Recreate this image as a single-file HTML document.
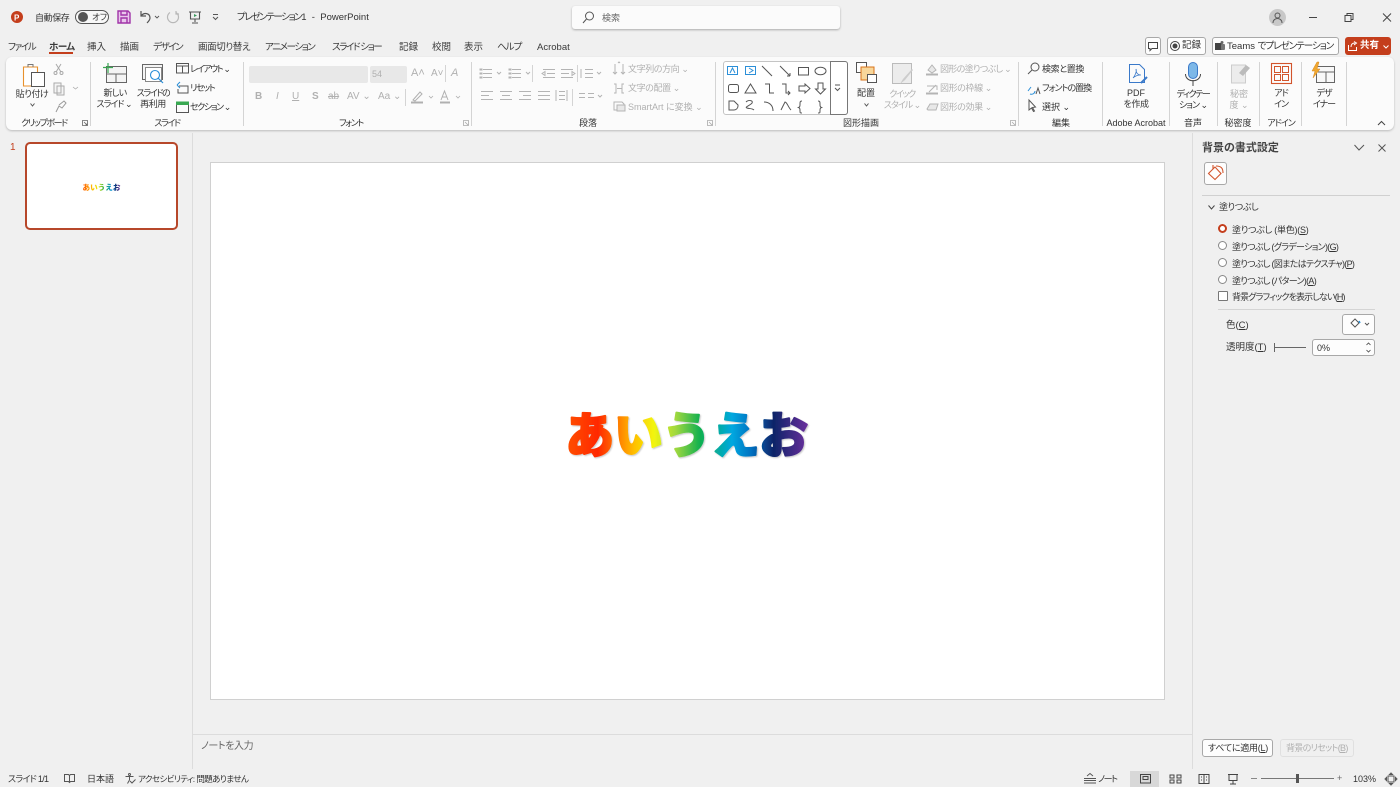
<!DOCTYPE html>
<html lang="ja"><head><meta charset="utf-8"><title>PowerPoint</title>
<style>
html,body{margin:0;padding:0;width:1400px;height:787px;overflow:hidden;background:#f0f0f0}
body{position:relative;font-family:"Liberation Sans","Noto Sans CJK JP",sans-serif;font-size:9px;color:#333;font-feature-settings:"palt" 1}
.t{position:absolute;white-space:nowrap;line-height:12px}
.c{text-align:center;transform:translateX(-50%)}
.g{color:#b0b0b0}
.m{font-size:9.5px;color:#3a3a3a;line-height:12px;top:41.5px}
.k1{letter-spacing:-1.4px}.k2{letter-spacing:-.7px}.k3{letter-spacing:-1px}.k4{letter-spacing:-.4px}
.sep{position:absolute;top:62px;height:64px;width:1px;background:#d4d4d4}
.abs{position:absolute}
svg{position:absolute;overflow:visible}
.btn{position:absolute;background:#fdfdfd;border:1px solid #a8a8a8;border-radius:3px;box-sizing:border-box}
</style></head><body>

<!-- title bar -->
<svg style="left:10px;top:10px" width="14" height="14"><circle cx="7" cy="7" r="6" fill="#c43e1c"/><text x="4" y="10.5" font-size="8" font-weight="700" fill="#fff" font-family="Liberation Sans">P</text></svg>
<div class="t k4" style="left:35px;top:11.500px">自動保存</div>
<div class="abs" style="left:75px;top:10px;width:34px;height:14px;border:1px solid #555;border-radius:8px;box-sizing:border-box;background:#f8f8f8"></div>
<div class="abs" style="left:78px;top:12px;width:10px;height:10px;border-radius:50%;background:#555"></div>
<div class="t" style="left:92px;top:11px;font-size:8.5px">オフ</div>
<svg style="left:117px;top:10px" width="14" height="14" fill="none" stroke="#a033a8" stroke-width="1.4"><path d="M1 1h10l2 2v10H1z" fill="#e9c6ec"/><path d="M4 1v4h6V1M4 13V8h6v5"/></svg>
<svg style="left:138px;top:10px" width="22" height="14" fill="none" stroke="#555" stroke-width="1.2"><path d="M3 1v5h5M3 6c3-4 9-3 9 2 0 2-2 4-3 5"/><path d="M17 6l2 2 2-2" stroke-width=".9"/></svg>
<svg style="left:166px;top:10px" width="14" height="14" fill="none" stroke="#b8b8b8" stroke-width="1.2"><path d="M10 2.500A5.500 5.500 0 1 1 4 2.500M10 1v3h3"/></svg>
<svg style="left:188px;top:11px" width="14" height="13" fill="none" stroke="#555" stroke-width="1.1"><path d="M1 1h12M2.500 1v7h9V1M7 8v3M4 12h6"/><path d="M6 3l3 1.500L6 6z" fill="#3a9a5c" stroke="none"/></svg>
<svg style="left:212px;top:14px" width="7" height="7" fill="none" stroke="#555"><path d="M1 .5h5M1 3l2.500 2.500L6 3"/></svg>
<div class="t" style="left:237px;top:11.500px;font-size:9.500px"><span class="k1">プレゼンテーション</span>1&nbsp; -&nbsp; PowerPoint</div>

<!-- search -->
<div class="abs" style="left:572px;top:6px;width:268px;height:23px;background:#fbfbfb;border-radius:3px;box-shadow:0 1px 2px #aaa"></div>
<svg style="left:582px;top:11px" width="12" height="13" fill="none" stroke="#555" stroke-width="1"><circle cx="7.500" cy="5" r="4"/><path d="M4.500 8L1 12"/></svg>
<div class="t g" style="left:602px;top:12px;color:#666">検索</div>

<!-- window -->
<div class="abs" style="left:1269px;top:9px;width:17px;height:17px;border-radius:50%;background:#c8c8c8"></div>
<svg style="left:1272px;top:12px" width="11" height="11" fill="none" stroke="#555"><circle cx="5.500" cy="3.500" r="2.500"/><path d="M1 11c0-6 9-6 9 0"/></svg>
<svg style="left:1309px;top:12px" width="82" height="12" fill="none" stroke="#444"><path d="M0 5.500h8"/><path d="M36 3.500h6v6h-6zM38 3.500v-2h6v6h-2"/><path d="M74 1.500l8 8M82 1.500l-8 8"/></svg>

<!-- tabs -->
<div class="t m k1" style="left:8px">ファイル</div>
<div class="t m" style="left:49px;font-weight:700;letter-spacing:-.5px">ホーム</div>
<div class="abs" style="left:49px;top:52px;width:24px;height:2px;background:#c43e1c"></div>
<div class="t m" style="left:87px">挿入</div>
<div class="t m" style="left:120px">描画</div>
<div class="t m k1" style="left:153px">デザイン</div>
<div class="t m k4" style="left:198px">画面切り替え</div>
<div class="t m k1" style="left:265px">アニメーション</div>
<div class="t m k1" style="left:332px">スライド ショー</div>
<div class="t m" style="left:399px">記録</div>
<div class="t m" style="left:432px">校閲</div>
<div class="t m" style="left:464px">表示</div>
<div class="t m k3" style="left:497px">ヘルプ</div>
<div class="t m" style="left:537px">Acrobat</div>

<!-- top right buttons -->
<div class="btn" style="left:1145px;top:37px;width:16px;height:18px"></div>
<svg style="left:1148px;top:42px" width="10" height="9" fill="none" stroke="#444"><path d="M.5.500h9v6H4L2 8.500v-2H.5z"/></svg>
<div class="btn" style="left:1167px;top:37px;width:39px;height:18px"></div>
<svg style="left:1170px;top:41px" width="10" height="10"><circle cx="5" cy="5" r="4.500" fill="none" stroke="#444"/><circle cx="5" cy="5" r="2.500" fill="#444"/></svg>
<div class="t" style="left:1182px;top:40px;font-size:9.500px">記録</div>
<div class="btn" style="left:1212px;top:37px;width:127px;height:18px"></div>
<svg style="left:1215px;top:41px" width="10" height="10"><rect x="0" y="2" width="7" height="7" fill="#444"/><rect x="6" y="3" width="4" height="6" rx="1" fill="#777"/><circle cx="7" cy="1.500" r="1.500" fill="#666"/></svg>
<div class="t" style="left:1227px;top:40.500px;font-size:9.500px">Teams <span class="k3">でプレゼンテーション</span></div>
<div class="abs" style="left:1345px;top:37px;width:46px;height:18px;border-radius:3px;background:#c43e1c"></div>
<svg style="left:1348px;top:41px" width="10" height="10" fill="none" stroke="#fff"><path d="M.5 4v5.500h8V6M3 6c0-3 2-4 4-4M6 .5L8.500 2 6 4"/></svg>
<div class="t" style="left:1360px;top:40px;font-size:9.500px;color:#fff;font-weight:700">共有</div>
<svg style="left:1383px;top:45px" width="6" height="4" fill="none" stroke="#fff"><path d="M.5.500L3 3 5.500.5"/></svg>

<!-- ribbon -->
<div class="abs" style="left:6px;top:57px;width:1388px;height:73px;background:#fbfbfb;border-radius:6px;box-shadow:0 1px 2px #bbb"></div>
<div class="sep" style="left:90px"></div><div class="sep" style="left:243px"></div><div class="sep" style="left:471px"></div><div class="sep" style="left:715px"></div><div class="sep" style="left:1018px"></div><div class="sep" style="left:1102px"></div><div class="sep" style="left:1169px"></div><div class="sep" style="left:1217px"></div><div class="sep" style="left:1259px"></div><div class="sep" style="left:1301px"></div><div class="sep" style="left:1346px"></div>

<!-- clipboard -->
<svg style="left:22px;top:63px" width="24" height="24" fill="none"><path d="M1.500 4h14v19h-14z" fill="#fff" stroke="#e8912d" stroke-width="1.100"/><path d="M6 4V1.500h5V4" stroke="#777"/><rect x="9.500" y="9.500" width="13" height="14" fill="#fff" stroke="#555"/></svg>
<div class="t c k4" style="left:32px;top:88px">貼り付け</div>
<svg style="left:30px;top:103px" width="5" height="4" fill="none" stroke="#555"><path d="M.5.500L2.500 3 4.500.5"/></svg>
<svg style="left:53px;top:62px" width="24" height="50" fill="none" stroke="#aaa"><path d="M3 2l5 8M8 2L3 10"/><circle cx="2.500" cy="11" r="1.500"/><circle cx="8.500" cy="11" r="1.500"/><path d="M1 21h7v10H1zM4 24h7v9H4z" fill="#f5f5f5"/><path d="M20 25l2.500 2 2.500-2" stroke-width=".8"/><path d="M3 50l3-6 3 2 4-5-2-2-5 4" stroke="#999"/></svg>
<div class="t c k1" style="left:44px;top:117px">クリップボード</div>
<svg style="left:82px;top:120px" width="6" height="6" fill="none" stroke="#666" stroke-width=".8"><path d="M.5 5.500v-5h5v5zM2 2l3 3M3.500 5H5V3.500"/></svg>

<!-- slide group -->
<svg style="left:103px;top:62px" width="24" height="22" fill="none"><rect x="3.500" y="4.500" width="20" height="16" fill="#f4f4f4" stroke="#666"/><path d="M4 12h19M13 12v8" stroke="#666"/><path d="M0 5.500h10M5 1v10" stroke="#39a852" stroke-width="1.200"/></svg>
<div class="t c k2" style="left:115px;top:87px">新しい</div><div class="t c k3" style="left:114px;top:98px">スライド ⌄</div>
<svg style="left:142px;top:64px" width="24" height="22" fill="none"><rect x=".5" y=".5" width="20" height="15" stroke="#666" fill="#f4f4f4"/><rect x="3.500" y="3.500" width="16" height="14" stroke="#888" fill="#fff"/><circle cx="13" cy="11" r="4.500" stroke="#2b8fd8" stroke-width="1.100"/><path d="M16 14l5 5" stroke="#2b8fd8" stroke-width="1.200"/></svg>
<div class="t c k1" style="left:153px;top:87px">スライドの</div><div class="t c k4" style="left:153px;top:98px">再利用</div>
<svg style="left:176px;top:63px" width="13" height="50" fill="none" stroke="#555"><rect x=".5" y=".5" width="12" height="9.500"/><path d="M1 3h11M6.500 3v7"/><path d="M3 23h9v7H2v-4" /><path d="M1 22l3-3M1 22l3 3" stroke="#2b8fd8"/><rect x=".5" y="39.500" width="12" height="10"/><path d="M.5 39h12v2.500H.5z" fill="#39a852" stroke="#39a852"/></svg>
<div class="t k1" style="left:190px;top:63px">レイアウト ⌄</div>
<div class="t k1" style="left:190px;top:82px">リセット</div>
<div class="t k1" style="left:190px;top:101px">セクション ⌄</div>
<div class="t c k1" style="left:167px;top:117px">スライド</div>

<!-- font -->
<div class="abs" style="left:249px;top:66px;width:119px;height:17px;background:#e8e8e8;border-radius:2px"></div>
<div class="abs" style="left:370px;top:66px;width:37px;height:17px;background:#e8e8e8;border-radius:2px"></div>
<div class="t g" style="left:372px;top:68px">54</div>
<div class="t g" style="left:411px;top:67px;font-size:11px">A˄</div><div class="t g" style="left:431px;top:68px;font-size:10px">A˅</div><div class="t g" style="left:451px;top:67px;font-size:11px;font-style:italic">A</div>
<div class="abs" style="left:445px;top:65px;width:1px;height:17px;background:#d4d4d4"></div>
<div class="t g" style="left:255px;top:91px;font-size:10px;font-weight:700">B</div>
<div class="t g" style="left:276px;top:91px;font-size:10px;font-style:italic">I</div>
<div class="t g" style="left:292px;top:91px;font-size:10px;text-decoration:underline">U</div>
<div class="t g" style="left:312px;top:91px;font-size:10px;font-weight:700">S</div>
<div class="t g" style="left:328px;top:91px;font-size:10px;text-decoration:line-through">ab</div>
<div class="t g" style="left:347px;top:91px;font-size:10px">AV ⌄</div>
<div class="t g" style="left:378px;top:91px;font-size:10px">Aa ⌄</div>
<div class="abs" style="left:405px;top:89px;width:1px;height:17px;background:#d4d4d4"></div>
<svg style="left:411px;top:90px" width="50" height="14" fill="none" stroke="#b0b0b0"><path d="M2 10l7-8 2 2-7 7z"/><path d="M0 12.500h12" stroke-width="2"/><path d="M18 6l2 2 2-2" stroke-width=".8"/><path d="M30 10l3.500-9 3.500 9M31 7h5"/><path d="M29 12.500h10" stroke-width="2"/><path d="M45 6l2 2 2-2" stroke-width=".8"/></svg>
<div class="t c k1" style="left:351px;top:117px">フォント</div>
<svg style="left:463px;top:120px" width="6" height="6" fill="none" stroke="#aaa" stroke-width=".8"><path d="M.5 5.500v-5h5v5zM2 2l3 3"/></svg>

<!-- paragraph -->
<svg style="left:479px;top:67px" width="130" height="38" fill="none" stroke="#b4b4b4"><path d="M4 2.500h9M4 6.500h9M4 10.500h9M18 5l2 2 2-2M33 2.500h9M33 6.500h9M33 10.500h9M47 5l2 2 2-2M64 2.500h12M68 6.500h8M64 10.500h12M63 6.500l3-2v4zM82 2.500h12M82 6.500h8M82 10.500h12M96 6.500l-3-2v4zM106 2.500h8M106 6.500h8M106 10.500h8M102 2v9M118 5l2 2 2-2"/><path d="M1 2h2v1H1zM1 6h2v1H1zM1 10h2v1H1zM30 2h2v1h-2zM30 6h2v1h-2zM30 10h2v1h-2z" fill="#b4b4b4"/><path d="M2 24.500h12M2 28.500h8M2 32.500h12M21 24.500h12M23 28.500h8M21 32.500h12M40 24.500h12M44 28.500h8M40 32.500h12M59 24.500h12M59 28.500h12M59 32.500h12M77 23v11M88 23v11M80 24.500h6M80 28.500h6M80 32.500h6M100 26.500h6M100 30.500h6M109 26.500h6M109 30.500h6M119 28l2 2 2-2"/></svg>
<div class="abs" style="left:532px;top:65px;width:1px;height:17px;background:#d4d4d4"></div><div class="abs" style="left:577px;top:65px;width:1px;height:17px;background:#d4d4d4"></div><div class="abs" style="left:572px;top:89px;width:1px;height:17px;background:#d4d4d4"></div>
<svg style="left:613px;top:62px" width="13" height="50" fill="none" stroke="#b4b4b4"><path d="M2 2v10M0 10l2 2 2-2M10 2v10M8 10l2 2 2-2M5 1l1-1 1 1"/><path d="M1 22h2v9H1M11 22h-2v9h2M4 26.500h5"/><path d="M1 40h8l2 2v6H1z"/><path d="M4 43h8v6H4z" fill="#e8e8e8"/></svg>
<div class="t g k4" style="left:628px;top:63px">文字列の方向 ⌄</div>
<div class="t g k4" style="left:628px;top:82px">文字の配置 ⌄</div>
<div class="t g" style="left:628px;top:101px">SmartArt に変換 ⌄</div>
<div class="t c" style="left:588px;top:117px">段落</div>
<svg style="left:707px;top:120px" width="6" height="6" fill="none" stroke="#aaa" stroke-width=".8"><path d="M.5 5.500v-5h5v5zM2 2l3 3"/></svg>

<!-- shapes -->
<div class="abs" style="left:723px;top:61px;width:125px;height:54px;border:1px solid #c4c4c4;border-radius:3px;box-sizing:border-box;background:#fff"></div>
<div class="abs" style="left:830px;top:61px;width:18px;height:54px;border:1px solid #777;border-radius:0 3px 3px 0;box-sizing:border-box;background:#fff"></div>
<svg style="left:726px;top:64px" width="120" height="48" fill="none" stroke="#555"><rect x="1.500" y="2.500" width="10" height="8" stroke="#2b8fd8"/><path d="M4 9l2.500-5L9 9" stroke="#2b8fd8"/><rect x="19.500" y="2.500" width="10" height="8" stroke="#2b8fd8"/><path d="M23 4l4 2.500L23 9" stroke="#2b8fd8"/><path d="M36 2l10 10M54 2l10 10M64 12v-3M64 12h-3"/><rect x="72.500" y="3.500" width="10" height="7.500"/><ellipse cx="94.500" cy="7" rx="5.500" ry="3.800"/>
<rect x="2.500" y="20.500" width="10" height="8" rx="2"/><path d="M19 29l5.500-9 5.500 9zM39 20h4.500v9H48M56 20h4v9h4M62 27l2 2-2 2M73 22h6v-2l5 4.500-5 4.500v-2h-6zM92 19h5v6h2.500l-5 5-5-5H92z"/>
<path d="M3 37h5l4 4v1a4 4 0 0 1-4 4H3zM20 38c3-3 9-1 5 2s-6 3-4 4 5 0 7 2M38 38c5 0 9 3 9 9M55 46l4-8c2 0 3 5 6 8M76 37c-2 0-2 1-2 3s0 3-1.500 3.500c1.500.5 1.500 1.500 1.500 3.500s0 2 2 2M92 37c2 0 2 1 2 3s0 3 1.500 3.500c-1.500.5-1.500 1.500-1.500 3.500s0 2-2 2"/>
<path d="M109 21h5M109 24l2.500 2.500L114 24" stroke-width="1"/></svg>
<svg style="left:856px;top:62px" width="22" height="22"><rect x=".5" y=".5" width="10" height="10" fill="#fff" stroke="#555"/><rect x="5" y="5" width="13" height="13" fill="#f8d79b" stroke="#d9731a"/><rect x="11.500" y="12.500" width="9" height="8" fill="#fff" stroke="#555"/></svg>
<div class="t c" style="left:866px;top:87px">配置</div><svg style="left:864px;top:103px" width="5" height="4" fill="none" stroke="#555"><path d="M.5.500L2.500 3 4.500.5"/></svg>
<svg style="left:892px;top:63px" width="22" height="23"><rect x=".5" y=".5" width="19" height="20" fill="#ececec" stroke="#bbb"/><path d="M8 21l3-5 9-10 1 1-8 10z" fill="#ccc"/></svg>
<div class="t c g k1" style="left:902px;top:88px">クイック</div><div class="t c g k3" style="left:902px;top:99px">スタイル ⌄</div>
<svg style="left:926px;top:63px" width="13" height="50" fill="none" stroke="#b4b4b4"><path d="M2 7l4-5 4 5-4 3z" fill="#e8e8e8"/><path d="M0 11.500h12" stroke-width="2"/><path d="M1 23h10v4M3 29l7-7" /><path d="M0 30.500h12" stroke-width="2"/><path d="M1 46l3-5h8l-2 6H2z" fill="#e8e8e8"/></svg>
<div class="t g k2" style="left:940px;top:63px">図形の塗りつぶし ⌄</div>
<div class="t g k4" style="left:940px;top:82px">図形の枠線 ⌄</div>
<div class="t g k4" style="left:940px;top:101px">図形の効果 ⌄</div>
<div class="t c" style="left:861px;top:117px">図形描画</div>
<svg style="left:1010px;top:120px" width="6" height="6" fill="none" stroke="#aaa" stroke-width=".8"><path d="M.5 5.500v-5h5v5zM2 2l3 3"/></svg>

<!-- edit -->
<svg style="left:1027px;top:62px" width="13" height="50" fill="none" stroke="#555"><circle cx="8" cy="5" r="4"/><path d="M5 8l-4 4"/><path d="M1 29l3-4M3 32c3 1 5-1 5-3" stroke="#2b8fd8"/><path d="M9 32l2-6 2 6" /><path d="M2 38v10l2.500-2 2 3.500 1-.5-2-3.500 3-.5z"/></svg>
<div class="t k4" style="left:1042px;top:63px">検索と置換</div>
<div class="t k3" style="left:1042px;top:82px">フォントの置換</div>
<div class="t" style="left:1042px;top:101px">選択 ⌄</div>
<div class="t c" style="left:1061px;top:117px">編集</div>

<!-- acrobat -->
<svg style="left:1129px;top:64px" width="20" height="21" fill="none" stroke="#3a79c9"><path d="M.5.500h10l5 5v13H.5z"/><path d="M4 14c2-2 4-7 3-9 0 4 2 6 5 6-3 0-6 1-8 3z" stroke-width=".8"/><path d="M12 19l6-6" stroke-width="2"/></svg>
<div class="t c" style="left:1136px;top:87px">PDF</div><div class="t c k4" style="left:1136px;top:98px">を作成</div>
<div class="t c" style="left:1136px;top:117px">Adobe Acrobat</div>

<!-- voice -->
<svg style="left:1185px;top:62px" width="16" height="24" fill="none"><rect x="3.500" y=".5" width="9" height="16" rx="4.500" fill="#7db8e8" stroke="#3a79c9"/><path d="M.5 12c0 9 15 9 15 0M8 18v6" stroke="#444"/></svg>
<div class="t c k1" style="left:1193px;top:88px">ディクテー</div><div class="t c k3" style="left:1193px;top:99px">ション ⌄</div>
<div class="t c" style="left:1193px;top:117px">音声</div>

<!-- sensitivity -->
<svg style="left:1231px;top:62px" width="20" height="22"><path d="M.5 3h14v18H.5z" fill="#ececec" stroke="#ccc"/><path d="M8 11l7-8 4 3-7 8z" fill="#bbb"/></svg>
<div class="t c g" style="left:1239px;top:88px">秘密</div><div class="t c g" style="left:1239px;top:99px">度 ⌄</div>
<div class="t c" style="left:1238px;top:117px">秘密度</div>

<!-- addin -->
<svg style="left:1271px;top:63px" width="21" height="21" fill="none" stroke="#d2542c"><rect x=".5" y=".5" width="20" height="20" stroke-width="1.100"/><rect x="3.500" y="3.500" width="6" height="6"/><rect x="11.500" y="3.500" width="6" height="6"/><rect x="3.500" y="11.500" width="6" height="6"/><rect x="11.500" y="11.500" width="6" height="6"/></svg>
<div class="t c k3" style="left:1281px;top:87px">アド</div><div class="t c k3" style="left:1281px;top:98px">イン</div>
<div class="t c k3" style="left:1281px;top:117px">アドイン</div>

<!-- designer -->
<svg style="left:1312px;top:62px" width="24" height="22" fill="none"><rect x="4.500" y="4.500" width="18" height="16" stroke="#666" fill="#f8f8f8"/><path d="M6 10h16M14 10v10" stroke="#666"/><path d="M5 0L0 9h3l-2 7 7-9H5l2-7z" fill="#f0a830" stroke="#d9861a" stroke-width=".5"/></svg>
<div class="t c k3" style="left:1324px;top:87px">デザ</div><div class="t c k3" style="left:1324px;top:98px">イナー</div>
<svg style="left:1377px;top:120px" width="9" height="6" fill="none" stroke="#444"><path d="M1 5l3.500-3.500L8 5"/></svg>

<!-- thumbnails -->
<div class="t" style="left:10px;top:142px;font-size:10px;color:#c43e1c">1</div>
<div class="abs" style="left:25px;top:142px;width:153px;height:88px;box-sizing:border-box;border:2px solid #b7472a;border-radius:5px;background:#fff"></div>
<svg style="left:25px;top:142px;font-feature-settings:normal" width="153" height="88"><defs><linearGradient id="g2" gradientUnits="userSpaceOnUse" x1="58" y1="0" x2="96" y2="0"><stop offset="0" stop-color="#ff5a00"/><stop offset=".25" stop-color="#ffc000"/><stop offset=".4" stop-color="#e8ea10"/><stop offset=".55" stop-color="#30b050"/><stop offset=".75" stop-color="#0090d8"/><stop offset=".88" stop-color="#12246a"/><stop offset="1" stop-color="#7030a0"/></linearGradient></defs><text x="57.500" y="48" font-size="7.600" font-weight="900" fill="url(#g2)" font-family="Noto Sans CJK JP">あいうえお</text></svg>
<div class="abs" style="left:192px;top:133px;width:1px;height:636px;background:#dcdcdc"></div>
<div class="abs" style="left:1192px;top:133px;width:1px;height:636px;background:#dcdcdc"></div>

<!-- slide -->
<div class="abs" style="left:210px;top:162px;width:955px;height:538px;box-sizing:border-box;background:#fff;border:1px solid #d0d0d0"></div>
<svg style="left:210px;top:162px;font-feature-settings:normal" width="955" height="538"><defs><linearGradient id="g1" gradientUnits="userSpaceOnUse" x1="356" y1="0" x2="600" y2="0"><stop offset="0" stop-color="#ff5000"/><stop offset=".13" stop-color="#ff2800"/><stop offset=".28" stop-color="#ffc000"/><stop offset=".36" stop-color="#f2f510"/><stop offset=".45" stop-color="#a0d840"/><stop offset=".55" stop-color="#10b050"/><stop offset=".68" stop-color="#00a8e0"/><stop offset=".76" stop-color="#0070c0"/><stop offset=".85" stop-color="#0c2468"/><stop offset="1" stop-color="#7030a0"/></linearGradient><filter id="s" x="-5%" y="-10%" width="110%" height="125%"><feDropShadow dx="1" dy="1" stdDeviation=".8" flood-color="#000" flood-opacity=".22"/></filter></defs><text x="355.500" y="290.500" font-size="48.500" font-weight="900" fill="url(#g1)" stroke="url(#g1)" stroke-width="2" stroke-linejoin="round" filter="url(#s)" font-family="Noto Sans CJK JP">あいうえお</text></svg>

<!-- notes -->
<div class="abs" style="left:193px;top:734px;width:999px;height:1px;background:#dcdcdc"></div>
<div class="t k4" style="left:201px;top:740.500px;font-size:10px;color:#666">ノートを入力</div>

<!-- pane -->
<div class="t" style="left:1202px;top:141.500px;font-size:11px;font-weight:700;color:#444">背景の書式設定</div>
<svg style="left:1354px;top:144px" width="34" height="8" fill="none" stroke="#555"><path d="M.5 1L5 6 10 1M24.500.5l7 7M31.500.5l-7 7"/></svg>
<div class="btn" style="left:1204px;top:162px;width:23px;height:23px"></div>
<svg style="left:1207px;top:164px" width="18" height="17" fill="none" stroke="#d2542c" stroke-width="1.100"><path d="M8 3L1.500 9.500 8 15.500l6-6z"/><path d="M6 1v4M9 2c5 0 7 2 7 7"/></svg>
<div class="abs" style="left:1202px;top:195px;width:188px;height:1px;background:#d0d0d0"></div>
<svg style="left:1208px;top:205px" width="7" height="5" fill="none" stroke="#444"><path d="M.5.500L3.500 4 6.500.5"/></svg>
<div class="t k4" style="left:1219px;top:201px">塗りつぶし</div>

<div class="abs" style="left:1218px;top:224px;width:9px;height:9px;box-sizing:border-box;border:2.500px solid #c43e1c;border-radius:50%;background:#fff"></div>
<div class="abs" style="left:1218px;top:241px;width:9px;height:9px;box-sizing:border-box;border:1px solid #888;border-radius:50%;background:#fff"></div>
<div class="abs" style="left:1218px;top:258px;width:9px;height:9px;box-sizing:border-box;border:1px solid #888;border-radius:50%;background:#fff"></div>
<div class="abs" style="left:1218px;top:275px;width:9px;height:9px;box-sizing:border-box;border:1px solid #888;border-radius:50%;background:#fff"></div>
<div class="abs" style="left:1218px;top:291px;width:10px;height:10px;box-sizing:border-box;border:1px solid #777;border-radius:1px;background:#fff"></div>
<div class="t" style="left:1232px;top:224px;letter-spacing:-.25px">塗りつぶし (単色)(<u>S</u>)</div>
<div class="t k2" style="left:1232px;top:241px">塗りつぶし (グラデーション)(<u>G</u>)</div>
<div class="t k2" style="left:1232px;top:258px">塗りつぶし (図またはテクスチャ)(<u>P</u>)</div>
<div class="t k2" style="left:1232px;top:275px">塗りつぶし (パターン)(<u>A</u>)</div>
<div class="t" style="left:1232px;top:291px;letter-spacing:-.85px">背景グラフィックを表示しない(<u>H</u>)</div>
<div class="abs" style="left:1218px;top:309px;width:157px;height:1px;background:#d4d4d4"></div>
<div class="t" style="left:1226px;top:320px;font-size:9.500px">色(<u>C</u>)</div>
<div class="btn" style="left:1342px;top:314px;width:33px;height:21px"></div>
<svg style="left:1350px;top:318px" width="20" height="11" fill="none" stroke="#555"><path d="M5 1L1 5l4 4 4-4z"/><path d="M9 3l1 2" stroke="#2b8fd8" stroke-width="1.500"/><path d="M15 5l2 2 2-2"/></svg>
<div class="t" style="left:1226px;top:342px;font-size:9.500px">透明度(<u>T</u>)</div>
<svg style="left:1274px;top:343px" width="33" height="9" fill="none" stroke="#666"><path d="M.5 0v9M1 4.500h31"/></svg>
<div class="btn" style="left:1312px;top:339px;width:63px;height:17px"></div>
<div class="t" style="left:1317px;top:342px">0%</div>
<svg style="left:1366px;top:342px" width="5" height="11" fill="none" stroke="#444" stroke-width=".8"><path d="M.5 3L2.500 1l2 2M.5 8l2 2 2-2"/></svg>

<div class="btn" style="left:1202px;top:739px;width:71px;height:18px"></div>
<div class="t" style="left:1208px;top:742px;letter-spacing:-.25px">すべてに適用(<u>L</u>)</div>
<div class="abs" style="left:1280px;top:739px;width:74px;height:18px;box-sizing:border-box;border:1px solid #e0e0e0;border-radius:3px"></div>
<div class="t g k2" style="left:1286px;top:742px">背景のリセット(<u>B</u>)</div>

<!-- status -->
<div class="t k2" style="left:8px;top:773px">スライド 1/1</div>
<svg style="left:64px;top:774px" width="11" height="10" fill="none" stroke="#555"><path d="M.5.500h4l1 1 1-1h4v7h-4l-1 1-1-1h-4zM5.500 1.500v7"/></svg>
<div class="t" style="left:87px;top:773px">日本語</div>
<svg style="left:125px;top:773px" width="11" height="11" fill="none" stroke="#555"><circle cx="4.500" cy="1.500" r="1"/><path d="M.5 3.500h8M4.500 3.500V7M4.500 7L2.500 10.500M5 8l2 2 3.500-3.500"/></svg>
<div class="t" style="left:138px;top:773px;font-size:8.500px;letter-spacing:-.6px">アクセシビリティ: 問題ありません</div>

<div class="abs" style="left:1130px;top:771px;width:29px;height:16px;background:#d8d8d8"></div>
<svg style="left:1084px;top:773px" width="12" height="11" fill="none" stroke="#555"><path d="M3 3l3-2.500L9 3M0 5.500h12M0 7.500h12M0 10h12" stroke-width=".9"/></svg>
<div class="t k1" style="left:1098px;top:773px">ノート</div>
<svg style="left:1140px;top:774px" width="100" height="11" fill="none" stroke="#444"><rect x=".5" y=".5" width="10" height="8.500"/><path d="M3 2.500h5v3H3z"/><path d="M30 1h4v3h-4zM37 1h4v3h-4zM30 6h4v3h-4zM37 6h4v3h-4z"/><path d="M59 .5h10v9H59zM64 .5v9M61 3h1M61 6h1M66 3h1M66 6h1"/><path d="M88 .5h10M89 .5v6h8v-6M93 6.500V10M90 10h6"/></svg>
<div class="abs" style="left:1261px;top:778px;width:73px;height:1px;background:#777"></div>
<div class="abs" style="left:1251px;top:778px;width:6px;height:1px;background:#888"></div>
<div class="abs" style="left:1296px;top:774px;width:3px;height:9px;background:#555"></div>
<div class="t" style="left:1337px;top:772px;color:#666">+</div>
<div class="t" style="left:1353px;top:773px">103%</div>
<svg style="left:1385px;top:773px" width="12" height="12" fill="none" stroke="#555"><rect x="3" y="3" width="6" height="6"/><path d="M6 0L4.500 1.500h3zM6 12l-1.500-1.500h3zM0 6l1.500-1.500v3zM12 6l-1.500-1.500v3z"/></svg>
</body></html>
